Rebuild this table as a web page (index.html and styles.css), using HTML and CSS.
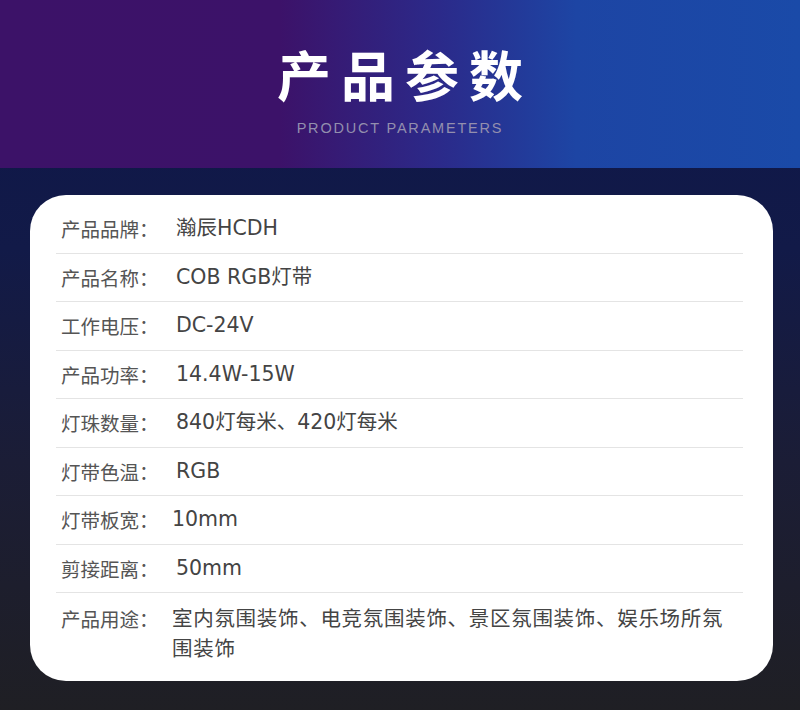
FILE: index.html
```html
<!DOCTYPE html>
<html>
<head>
  <meta charset="UTF-8">
  <title>产品参数</title>
  <link rel="stylesheet" href="styles.css">
</head>
<body>
  <header class="banner">
    <h1 class="banner-title">产品参数</h1>
    <div class="banner-sub">PRODUCT PARAMETERS</div>
  </header>
  <main class="stage">
    <div class="spec-card">
      <div class="spec-row"><span class="spec-label">产品品牌：</span><span class="spec-value">瀚辰HCDH</span></div>
      <div class="spec-row"><span class="spec-label">产品名称：</span><span class="spec-value">COB RGB灯带</span></div>
      <div class="spec-row"><span class="spec-label">工作电压：</span><span class="spec-value">DC-24V</span></div>
      <div class="spec-row"><span class="spec-label">产品功率：</span><span class="spec-value">14.4W-15W</span></div>
      <div class="spec-row"><span class="spec-label">灯珠数量：</span><span class="spec-value">840灯每米、420灯每米</span></div>
      <div class="spec-row"><span class="spec-label">灯带色温：</span><span class="spec-value">RGB</span></div>
      <div class="spec-row"><span class="spec-label">灯带板宽：</span><span class="spec-value tight">10mm</span></div>
      <div class="spec-row"><span class="spec-label">剪接距离：</span><span class="spec-value">50mm</span></div>
      <div class="spec-row last"><span class="spec-label">产品用途：</span><span class="spec-value tight">室内氛围装饰、电竞氛围装饰、景区氛围装饰、娱乐场所氛围装饰</span></div>
    </div>
  </main>
</body>
</html>
```

FILE: styles.css
```css
/* Page */
body {
  margin: 0;
  width: 800px;
  height: 710px;
  overflow: hidden;
  font-family: "Noto Sans CJK SC", "Open Sans", sans-serif;
  background: linear-gradient(180deg, #0d1649 0%, #121a48 35%, #1b1d36 65%, #1f1f24 100%);
}
/* Header band */
.banner {
  height: 168px;
  box-sizing: border-box;
  padding-top: 35px;
  text-align: center;
  background: linear-gradient(90deg, #3c1268 0%, #3c1269 35%, #2b2a8a 55%, #1d45a4 72%, #1a4aa8 100%);
}
.banner-title {
  margin: 0;
  color: #fff;
  font-size: 54px;
  font-weight: bold;
  line-height: 78px;
  letter-spacing: 10px;
  padding-left: 10px;
}
.banner-sub {
  margin-top: 7px;
  color: #938fae;
  font-family: "Liberation Sans", Arial, sans-serif;
  font-size: 14.5px;
  letter-spacing: 1.8px;
}
/* Card */
.stage {
  padding: 27px 27px 0 30px;
}
.spec-card {
  background: #fff;
  border-radius: 36px;
  height: 486px;
  box-sizing: border-box;
  padding: 10px 30px 0 26px;
}
.spec-row {
  display: flex;
  align-items: flex-start;
  padding: 11.25px 0;
  line-height: 25px;
  border-bottom: 1px solid #e4e4e4;
}
.spec-row.last {
  border-bottom: none;
  line-height: 30px;
  padding-top: 11px;
}
.spec-label {
  flex: 0 0 auto;
  width: 115px;
  padding-left: 5px;
  color: #555;
  font-size: 19.5px;
}
.spec-value {
  flex: 1;
  color: #444;
  font-family: "DejaVu Sans", "Noto Sans CJK SC", sans-serif;
  font-size: 20.5px;
}
.spec-value.tight {
  margin-left: -4px;
}
.last .spec-value {
  flex: 0 0 auto;
  width: 562px;
  letter-spacing: 0.7px;
}
```
